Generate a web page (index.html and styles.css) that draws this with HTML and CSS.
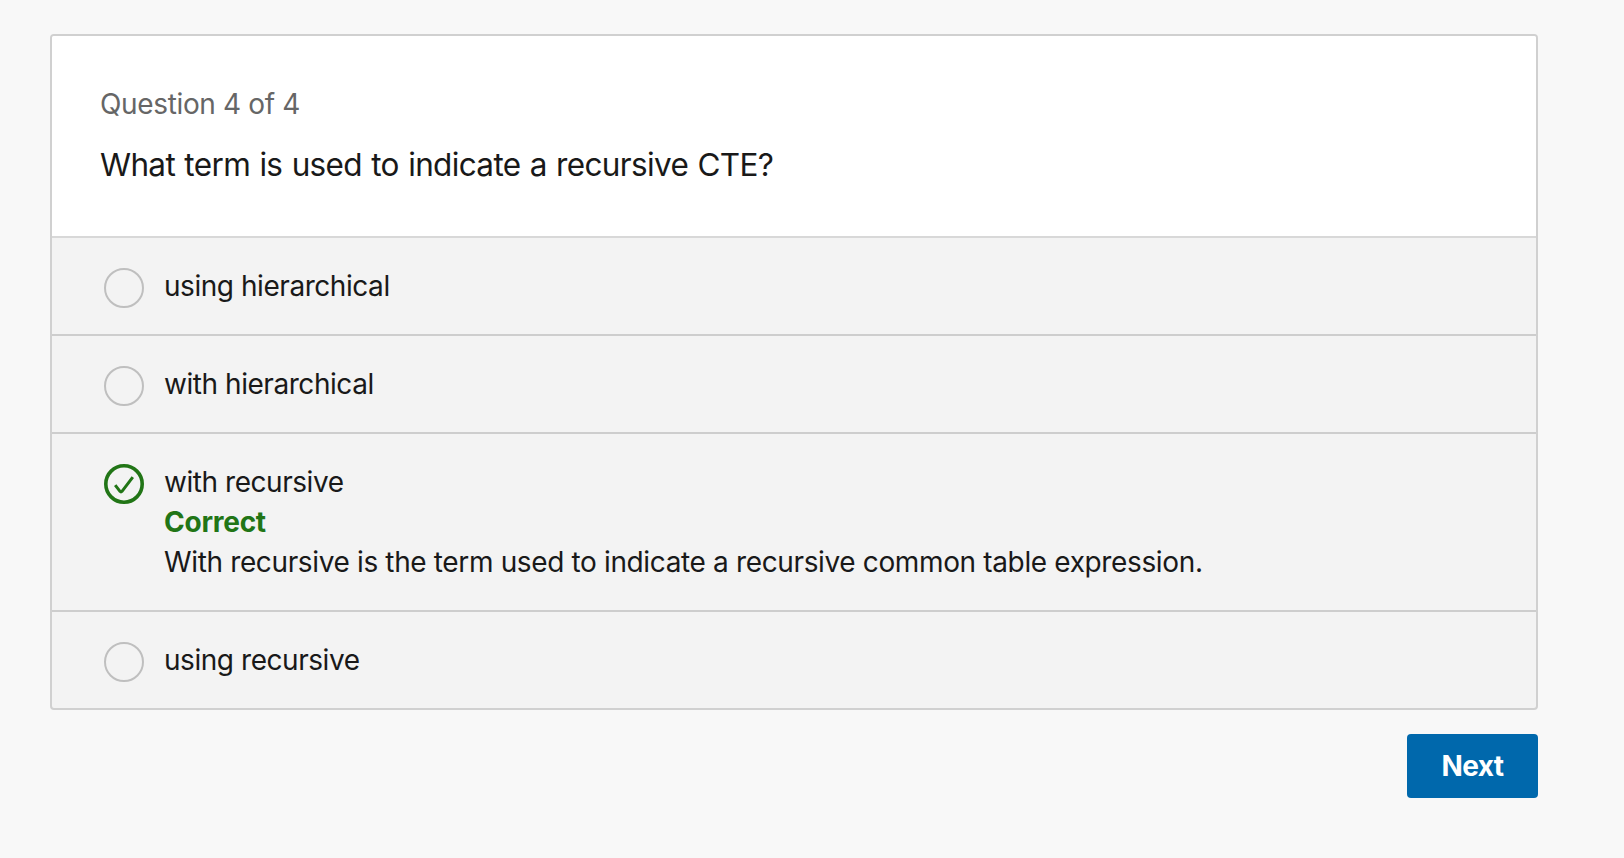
FILE: index.html
```html
<!DOCTYPE html>
<html lang="en">
<head>
<meta charset="utf-8">
<title>Question 4 of 4</title>
<link rel="stylesheet" href="styles.css">
</head>
<body>
<main class="quiz">
  <section class="card">
    <header class="question">
      <p class="progress">Question 4 of 4</p>
      <h1 class="prompt">What term is used to indicate a recursive CTE?</h1>
    </header>
    <ul class="options">
      <li class="option"><span class="radio"></span><p class="answer">using hierarchical</p></li>
      <li class="option"><span class="radio"></span><p class="answer">with hierarchical</p></li>
      <li class="option">
        <svg class="check" viewBox="0 0 40 40" fill="none" stroke="currentColor"><circle cx="20" cy="20" r="18.2" stroke-width="3.6"/><path d="M11.2 21.2L16 27.4Q17 28.6 18 27.4L28.8 13.2" stroke-width="3" stroke-linejoin="round"/></svg>
        <div class="answer">
          <p>with recursive</p>
          <p class="correct">Correct</p>
          <p class="explanation">With recursive is the term used to indicate a recursive common table expression.</p>
        </div>
      </li>
      <li class="option"><span class="radio"></span><p class="answer">using recursive</p></li>
    </ul>
  </section>
  <button class="next" type="button">Next</button>
</main>
</body>
</html>
```
FILE: styles.css
```css
* { box-sizing: border-box; }
body { margin: 0; background: #f8f8f8; color: #191919; font-family: Inter, sans-serif; }
p, h1, ul { margin: 0; padding: 0; font-weight: 400; }
.quiz { display: flex; flex-direction: column; align-items: flex-end; width: 1538px; padding-top: 34px; }
.card { width: 1488px; border: 2px solid #d0d0d0; border-radius: 4px; overflow: hidden; background: #f3f3f3; }
.question { height: 202px; padding: 48px 48px 0; background: #fff; border-bottom: 2px solid #d8d8d8; }
.progress { font-size: 28px; line-height: 40px; color: #666; letter-spacing: -0.35px; }
.prompt { margin-top: 17px; font-size: 31.5px; line-height: 48px; letter-spacing: -0.65px; word-spacing: 1.1px; }
.options { list-style: none; }
.option { display: flex; align-items: flex-start; gap: 20px; padding: 28px 52px; border-bottom: 2px solid #cdcdcd; }
.option:last-child { border-bottom: 0; }
.radio, .check { flex: none; width: 40px; height: 40px; margin: 2px 0 -2px; }
.radio { border: 2px solid #bfbfbf; border-radius: 50%; }
.check { color: #217516; }
.answer { font-size: 28px; line-height: 40px; letter-spacing: -0.45px; white-space: nowrap; }
.correct { color: #217516; font-weight: 700; letter-spacing: -0.25px; }
.explanation { letter-spacing: -0.36px; }
.next { margin-top: 24px; width: 131px; height: 64px; border: 0; border-radius: 4px; background: #0068ac; color: #fff; font: 700 28px/64px Inter, sans-serif; letter-spacing: -0.6px; padding: 0; }
```
